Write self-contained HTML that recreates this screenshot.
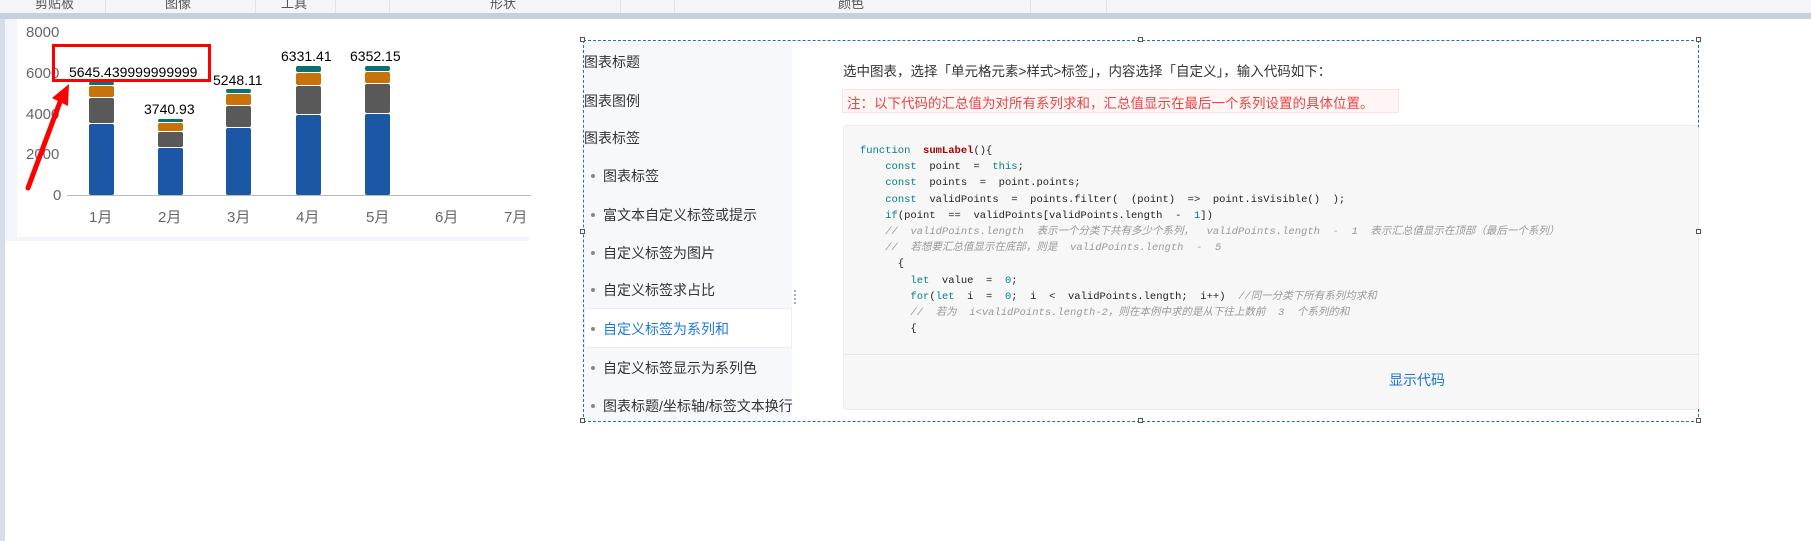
<!DOCTYPE html>
<html><head><meta charset="utf-8"><style>
*{margin:0;padding:0;box-sizing:border-box}
body{width:1811px;height:541px;overflow:hidden;background:#fff;position:relative;font-family:"Liberation Sans","Noto Sans CJK SC",sans-serif}
.a{position:absolute}
.tb{left:0;top:0;width:1811px;height:13px;background:#f4f5f7}
.sep{top:0;width:1px;height:13px;background:#e0e2e6}
.tl{top:-7px;font-size:13px;color:#555}
.bar{background:#1c57a5;border-radius:2px}
.mi{left:584px;font-size:14px;color:#333;white-space:nowrap}
.dot{display:inline-block;width:4px;height:4px;border-radius:50%;background:#888;margin:0 8px 3px 7px}
pre{font-family:"Liberation Mono","Noto Sans CJK SC",monospace;font-size:10.5px;line-height:16.2px;color:#222}
.k{color:#008080}.f{color:#a00;font-weight:bold}.c{color:#999;font-style:italic}
.h{width:5px;height:5px;border:1px solid #555;background:#fff}
.xl{position:absolute;white-space:nowrap}
.yl{font-size:15px;color:#666}
</style></head><body>
<div class="a tb"></div>
<div class="a tl" style="left:35px">剪贴板</div><div class="a tl" style="left:165px">图像</div><div class="a tl" style="left:281px">工具</div><div class="a tl" style="left:490px">形状</div><div class="a tl" style="left:838px">颜色</div>
<div class="a sep" style="left:105px"></div><div class="a sep" style="left:255px"></div><div class="a sep" style="left:335px"></div><div class="a sep" style="left:389px"></div><div class="a sep" style="left:620px"></div><div class="a sep" style="left:674px"></div><div class="a sep" style="left:1030px"></div><div class="a sep" style="left:1106px"></div>
<div class="a" style="left:0;top:13px;width:1811px;height:6px;background:#c6cfdf"></div>
<div class="a" style="left:0;top:19px;width:5px;height:522px;background:#d7deea"></div>
<div class="a" style="left:5px;top:19px;width:12px;height:222px;background:#f2f5fb"></div>
<div class="a" style="left:5px;top:237px;width:524px;height:4px;background:#f2f5fb"></div>
<!-- chart -->
<div class="a yl" style="left:26px;top:24px">8000</div>
<div class="a yl" style="left:26px;top:65px">6000</div>
<div class="a yl" style="left:26px;top:106px">4000</div>
<div class="a yl" style="left:26px;top:146px">2000</div>
<div class="a yl" style="left:53px;top:187px">0</div>
<div class="a" style="left:67px;top:195px;width:464px;height:1px;background:#bbb"></div>
<div class="a bar" style="left:89px;top:124px;width:25px;height:71px"></div>
<div class="a" style="left:89px;top:98px;width:25px;height:25px;background:#595959;border-radius:2px"></div>
<div class="a" style="left:89px;top:86px;width:25px;height:11px;background:#c8720a;border-radius:2px"></div>
<div class="a" style="left:89px;top:82px;width:25px;height:3px;background:#0b7070;border-radius:2px"></div>
<div class="a bar" style="left:158px;top:148px;width:25px;height:47px"></div>
<div class="a" style="left:158px;top:132px;width:25px;height:15px;background:#595959;border-radius:2px"></div>
<div class="a" style="left:158px;top:123px;width:25px;height:8px;background:#c8720a;border-radius:2px"></div>
<div class="a" style="left:158px;top:119px;width:25px;height:3px;background:#0b7070;border-radius:2px"></div>
<div class="a bar" style="left:226px;top:128px;width:25px;height:67px"></div>
<div class="a" style="left:226px;top:106px;width:25px;height:21px;background:#595959;border-radius:2px"></div>
<div class="a" style="left:226px;top:94px;width:25px;height:11px;background:#c8720a;border-radius:2px"></div>
<div class="a" style="left:226px;top:89px;width:25px;height:4px;background:#0b7070;border-radius:2px"></div>
<div class="a bar" style="left:296px;top:115px;width:25px;height:80px"></div>
<div class="a" style="left:296px;top:86px;width:25px;height:28px;background:#595959;border-radius:2px"></div>
<div class="a" style="left:296px;top:73px;width:25px;height:12px;background:#c8720a;border-radius:2px"></div>
<div class="a" style="left:296px;top:66px;width:25px;height:6px;background:#0b7070;border-radius:2px"></div>
<div class="a bar" style="left:365px;top:114px;width:25px;height:81px"></div>
<div class="a" style="left:365px;top:84px;width:25px;height:29px;background:#595959;border-radius:2px"></div>
<div class="a" style="left:365px;top:72px;width:25px;height:11px;background:#c8720a;border-radius:2px"></div>
<div class="a" style="left:365px;top:66px;width:25px;height:5px;background:#0b7070;border-radius:2px"></div>
<div class="a" style="left:144px;top:101px;font-size:14px">3740.93</div>
<div class="a" style="left:213px;top:72px;font-size:14px">5248.11</div>
<div class="a" style="left:281px;top:48px;font-size:14px">6331.41</div>
<div class="a" style="left:350px;top:48px;font-size:14px">6352.15</div>
<div class="a" style="left:69px;top:64px;font-size:14px">5645.439999999999</div>
<div class="a" style="left:52px;top:44px;width:159px;height:38px;border:3px solid #f00"></div>
<svg class="a" style="left:0;top:0" width="200" height="220"><line x1="28" y1="188" x2="60" y2="102" stroke="#f00" stroke-width="5" stroke-linecap="round"/><polygon points="69,84 52,98 68,106" fill="#f00"/></svg>
<div class="a" style="left:0;top:206px;font-size:15px;color:#666">
<span class="xl" style="left:89px">1月</span><span class="xl" style="left:158px">2月</span><span class="xl" style="left:227px">3月</span><span class="xl" style="left:296px">4月</span><span class="xl" style="left:366px">5月</span><span class="xl" style="left:435px">6月</span><span class="xl" style="left:504px">7月</span></div>
<!-- right panel -->
<div class="a" style="left:583px;top:40px;width:1116px;height:382px;border:1px dashed #1a73c8"></div>
<div class="a" style="left:584px;top:41px;width:208px;height:380px;background:#f7f8fc"></div>
<div class="a" style="left:584px;top:308px;width:208px;height:40px;background:#fff;border:1px solid #eceef3"></div>
<div class="a mi" style="top:52px">图表标题</div>
<div class="a mi" style="top:91px">图表图例</div>
<div class="a mi" style="top:128px">图表标签</div>
<div class="a mi" style="top:166px"><span class="dot"></span>图表标签</div>
<div class="a mi" style="top:205px"><span class="dot"></span>富文本自定义标签或提示</div>
<div class="a mi" style="top:243px"><span class="dot"></span>自定义标签为图片</div>
<div class="a mi" style="top:280px"><span class="dot"></span>自定义标签求占比</div>
<div class="a mi" style="top:319px;color:#1a7ae0"><span class="dot"></span>自定义标签为系列和</div>
<div class="a mi" style="top:358px"><span class="dot"></span>自定义标签显示为系列色</div>
<div class="a mi" style="top:396px"><span class="dot"></span>图表标题/坐标轴/标签文本换行</div>
<div class="a" style="left:794px;top:290px;width:2px;height:14px;border-left:2px dotted #aab"></div>
<div class="a" style="left:843px;top:60px;font-size:13.5px;color:#333;white-space:nowrap">选中图表，选择「单元格元素&gt;样式&gt;标签」，内容选择「自定义」，输入代码如下：</div>
<div class="a" style="left:842px;top:89px;width:557px;height:24px;background:#fff5f5;border:1px solid #fde2e2;font-size:13.5px;color:#e84545;padding:2px 0 0 4px;white-space:nowrap">注：以下代码的汇总值为对所有系列求和，汇总值显示在最后一个系列设置的具体位置。</div>
<div class="a" style="left:843px;top:125px;width:856px;height:285px;background:#f7f7f7;border:1px solid #ececec;border-radius:4px"></div>
<pre class="a" style="left:860px;top:143px"><span class="k">function</span>  <span class="f">sumLabel</span>(){
    <span class="k">const</span>  point  =  <span class="k">this</span>;
    <span class="k">const</span>  points  =  point.points;
    <span class="k">const</span>  validPoints  =  points.filter(  (point)  =>  point.isVisible()  );
    <span class="k">if</span>(point  ==  validPoints[validPoints.length  -  <span class="k">1</span>])
    <span class="c">//  validPoints.length  表示一个分类下共有多少个系列，  validPoints.length  -  1  表示汇总值显示在顶部（最后一个系列）</span>
    <span class="c">//  若想要汇总值显示在底部，则是  validPoints.length  -  5</span>
      {
        <span class="k">let</span>  value  =  <span class="k">0</span>;
        <span class="k">for</span>(<span class="k">let</span>  i  =  <span class="k">0</span>;  i  &lt;  validPoints.length;  i++)  <span class="c">//同一分类下所有系列均求和</span>
        <span class="c">//  若为  i&lt;validPoints.length-2，则在本例中求的是从下往上数前  3  个系列的和</span>
        {</pre>
<div class="a" style="left:844px;top:354px;width:855px;height:1px;background:#e6e6e6"></div>
<div class="a" style="left:1389px;top:370px;font-size:14px;color:#1a73d0">显示代码</div>
<div class="a h" style="left:580px;top:37px"></div><div class="a h" style="left:1138px;top:37px"></div><div class="a h" style="left:1696px;top:37px"></div>
<div class="a h" style="left:580px;top:229px"></div><div class="a h" style="left:1696px;top:229px"></div>
<div class="a h" style="left:580px;top:418px"></div><div class="a h" style="left:1138px;top:418px"></div><div class="a h" style="left:1696px;top:418px"></div>
</body></html>
